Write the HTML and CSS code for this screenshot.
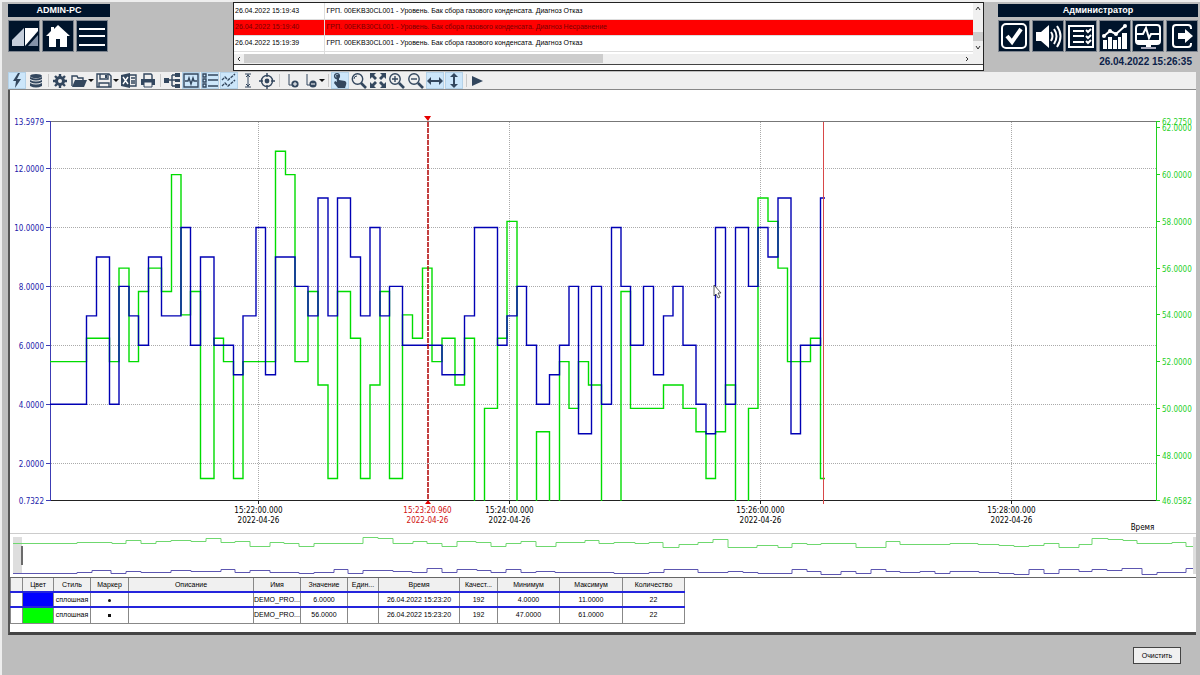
FILE: index.html
```html
<!DOCTYPE html>
<html lang="ru">
<head>
    <meta charset="UTF-8">
    <title>Тренды</title>
    <link rel="stylesheet" href="styles.css">
</head>
<body>
    <header class="top">
        <div class="station">
            <div class="title-bar">ADMIN-PC</div>
            <div class="nav">
                <button class="nav-btn" aria-label="Проект"><svg viewBox="1 1 30 30"><path fill="#c5cedb" d="M4 26V20L16 8H16V26z"/><path fill="#fff" d="M17 8H30V11L17 26z"/><path fill="#8492a8" d="M30 15V26H20z"/></svg></button>
                <button class="nav-btn" aria-label="Домой"><svg viewBox="1 1 30 30"><path fill="#fff" d="M16 5L28 16H25V27H18V19H14V27H7V16H4L9 11V7H12V9z"/></svg></button>
                <button class="nav-btn" aria-label="Меню"><svg viewBox="1 1 30 30"><path stroke="#fff" stroke-width="2" d="M3 9H29M3 16H29M3 25H29"/></svg></button>
            </div>
        </div>

        <div class="alarms">
            <div class="alarm-view">
                <table class="alarm-table">
                    <tr><td class="when">26.04.2022 15:19:43</td><td>ГРП. 00EKB30CL001 - Уровень. Бак сбора газового конденсата. Диагноз Отказ</td></tr>
                    <tr class="alert"><td class="when">26.04.2022 15:19:40</td><td>ГРП. 00EKB30CL001 - Уровень. Бак сбора газового конденсата. Диагноз Несравнение</td></tr>
                    <tr><td class="when">26.04.2022 15:19:39</td><td>ГРП. 00EKB30CL001 - Уровень. Бак сбора газового конденсата. Диагноз Отказ</td></tr>
                    <tr class="rest"><td class="when"></td><td></td></tr>
                </table>
                <div class="vscroll">
                    <svg viewBox="0 0 10 10"><path d="M3 7L5 4L7 7"/></svg>
                    <span class="vthumb"></span>
                    <svg viewBox="0 0 10 10"><path d="M3 3L5 6L7 3"/></svg>
                </div>
            </div>
            <div class="hscroll">
                <svg viewBox="0 0 10 10"><path d="M6 3L4 5L6 7"/></svg>
                <div class="htrack"><div class="hthumb"></div></div>
                <svg viewBox="0 0 10 10"><path d="M4 3L6 5L4 7"/></svg>
            </div>
        </div>

        <div class="operator">
            <div class="title-bar">Администратор</div>
            <div class="nav">
                <button class="nav-btn" aria-label="Квитировать"><svg viewBox="1 1 30 30"><rect class="line" x="4" y="4" width="24" height="24" rx="4"/><path fill="none" stroke="#fff" stroke-width="4" d="M9 16L14 22L23 9"/></svg></button>
                <button class="nav-btn" aria-label="Звук"><svg viewBox="1 1 30 30"><path fill="#fff" d="M4 12H9L17 5V28L9 21H4z"/><path class="line" d="M19 12Q22 16 19 21M22 9Q27 16 22 24M25 6Q32 16 25 27"/></svg></button>
                <button class="nav-btn" aria-label="Журнал"><svg viewBox="1 1 30 30"><path class="line" d="M4 6H28V27H4zM8 11H19M8 16H19M8 22H19M21 10L23 12L26 9M21 16L23 18L26 15M21 21L23 23L26 20"/></svg></button>
                <button class="nav-btn" aria-label="Тренды"><svg viewBox="1 1 30 30"><path fill="#fff" d="M4 20H8V29H4zM9 17H13V29H9zM14 20H18V29H14zM19 17H22V29H19zM23 13H28V29H23z"/><path class="line" d="M5 16L11 11L17 14L26 6"/><g fill="#fff"><circle cx="5" cy="16" r="2"/><circle cx="11" cy="11" r="2"/><circle cx="17" cy="14" r="2"/><circle cx="26" cy="6" r="2"/></g></svg></button>
                <button class="nav-btn" aria-label="Диагностика"><svg viewBox="1 1 30 30"><rect class="line" x="4" y="5" width="24" height="19" rx="3"/><path class="line" d="M5 14H11L14 8L17 18L19 14H27"/><path fill="#fff" d="M4 20H28V24H4zM14 24H19V27H14z"/><path fill="#aab" d="M9 27H24V29H9z"/></svg></button>
                <button class="nav-btn" aria-label="Выход"><svg viewBox="1 1 30 30"><path class="line" d="M25 9V8Q25 5 22 5H10Q7 5 7 8V24Q7 27 10 27H22Q25 27 25 24V23"/><path fill="#fff" d="M12 13H19V9L27 16L19 23V19H12z"/></svg></button>
            </div>
            <time class="clock">26.04.2022 15:26:35</time>
        </div>
    </header>

    <main class="trend">
        <div class="toolbar">
            <button class="tool on" aria-label="Онлайн"><svg viewBox="0 0 18 17"><path class="f" d="M10 1L5 9H8L7 16L13 7H9L12 1z"/></svg></button>
            <button class="tool" aria-label="Архив"><svg viewBox="0 0 18 17"><ellipse class="f" cx="9" cy="4" rx="6" ry="2"/><path class="f" d="M3 5Q9 8 15 5V7Q9 10 3 7zM3 8Q9 11 15 8V10Q9 13 3 10zM3 11Q9 14 15 11V14Q9 17 3 14z"/></svg></button>
            <span class="sep"></span>
            <button class="tool" aria-label="Настройки"><svg viewBox="0 0 18 17"><circle cx="9" cy="9" r="3.5" fill="none" stroke="#33475e" stroke-width="3"/><path stroke="#33475e" stroke-width="2.4" d="M9 2V5M9 13V16M2 9H5M13 9H16M4 4L6 6M12 12L14 14M4 14L6 12M12 6L14 4"/></svg></button>
            <button class="tool drop" aria-label="Открыть"><svg viewBox="0 0 18 17"><path class="s" d="M2 14V4H7L8 6H13V8"/><path class="f" d="M5 8H17L14 15H2z"/></svg><i class="caret"></i></button>
            <button class="tool drop" aria-label="Сохранить"><svg viewBox="0 0 18 17"><path class="s" d="M2 2H14L16 4V15H2zM5 2V7H13V2M4 15V11H14V15"/><path class="f" d="M10 3H12V6H10z"/></svg><i class="caret"></i></button>
            <button class="tool" aria-label="Экспорт в Excel"><svg viewBox="0 0 18 17"><path class="f" d="M1 3L10 1V16L1 14z"/><path class="s" d="M10 3H16V14H10M11 6H15M11 9H15M11 11H15"/><path stroke="#fff" stroke-width="1.4" d="M3 5L8 12M8 5L3 12"/></svg></button>
            <button class="tool" aria-label="Печать"><svg viewBox="0 0 18 17"><path class="s" d="M5 7V2H12L13 3V7"/><path class="f" d="M2 7H16V13H2z"/><path fill="#efefef" stroke="#33475e" d="M5 10H13V15H5z"/></svg></button>
            <span class="sep"></span>
            <button class="tool" aria-label="Структура"><svg viewBox="0 0 18 17"><path class="f" d="M1 6H6V11H1zM12 1H17V5H12zM12 7H17V10H12zM12 12H17V16H12z"/><path class="s" d="M6 8H12M9 3V14M9 3H12M9 14H12"/></svg></button>
            <button class="tool on" aria-label="График"><svg viewBox="0 0 18 17"><path class="s" d="M2 2H16V15H2zM3 9H6L7 6L9 12L11 6L12 9H15"/></svg></button>
            <button class="tool on" aria-label="Легенда"><svg viewBox="0 0 18 17"><path class="s" d="M2 2H5V5H2zM2 7H5V10H2zM2 12H5V15H2zM7 3H17M7 8H17M7 14H17"/></svg></button>
            <button class="tool on" aria-label="Линии"><svg viewBox="0 0 18 17"><path class="s" stroke-dasharray="3 1" d="M2 8L5 5L8 8L15 2M2 14L5 11L8 14L15 8"/></svg></button>
            <button class="tool" aria-label="Курсор"><svg viewBox="0 0 18 17"><path class="thin" d="M6 2H12M6 15H12M9 2V15M7 5L9 3L11 5M7 12L9 14L11 12"/></svg></button>
            <button class="tool" aria-label="Центр"><svg viewBox="0 0 18 17"><circle class="s" cx="9" cy="9" r="5.5"/><circle class="f" cx="9" cy="9" r="2.4"/><path class="s" d="M9 1V5M9 13V17M1 9H5M13 9H17"/></svg></button>
            <span class="sep"></span>
            <button class="tool" aria-label="Добавить ось"><svg viewBox="0 0 18 17"><path class="thin" d="M7 2V13H10"/><circle class="f" cx="13" cy="12" r="3.6"/><path stroke="#fff" d="M11 12H15M13 10V14"/></svg></button>
            <button class="tool drop" aria-label="Удалить ось"><svg viewBox="0 0 18 17"><path class="thin" d="M6 2V13H9"/><circle class="f" cx="12" cy="12" r="3.6"/><path stroke="#fff" d="M10 12H14"/></svg><i class="caret"></i></button>
            <span class="sep"></span>
            <button class="tool on" aria-label="Рука"><svg viewBox="0 0 18 17"><circle class="s" cx="6" cy="4" r="2.4"/><path class="f" d="M5 3H8V8L14 9Q16 10 15 13L14 16H7L3 11L4 9L6 10z"/></svg></button>
            <button class="tool" aria-label="Масштаб"><svg viewBox="0 0 18 17"><circle class="s" cx="7.5" cy="7" r="5.2"/><path class="thin" d="M4 7Q4 4 7 4"/><path stroke="#33475e" stroke-width="2.6" d="M11 11L16 16"/></svg></button>
            <button class="tool" aria-label="Весь график"><svg viewBox="0 0 18 17"><path class="f" d="M1 1H7L5 3L8 6L6 8L3 5L1 7zM17 1H11L13 3L10 6L12 8L15 5L17 7zM1 16H7L5 14L8 11L6 9L3 12L1 10zM17 16H11L13 14L10 11L12 9L15 12L17 10z"/></svg></button>
            <button class="tool" aria-label="Увеличить"><svg viewBox="0 0 18 17"><circle class="s" cx="7" cy="7" r="5.2"/><path class="s" d="M4 7H10M7 4V10"/><path stroke="#33475e" stroke-width="2.6" d="M11 11L16 16"/></svg></button>
            <button class="tool" aria-label="Уменьшить"><svg viewBox="0 0 18 17"><circle class="s" cx="7" cy="7" r="5.2"/><path class="s" d="M4 7H10"/><path stroke="#33475e" stroke-width="2.6" d="M11 11L16 16"/></svg></button>
            <button class="tool on" aria-label="По горизонтали"><svg viewBox="0 0 18 17"><path class="f" d="M1 9L5 5V8H13V5L17 9L13 13V10H5V13z"/></svg></button>
            <button class="tool on" aria-label="По вертикали"><svg viewBox="0 0 18 17"><path class="f" d="M9 1L13 5H10V12H13L9 16L5 12H8V5H5z"/></svg></button>
            <span class="sep"></span>
            <button class="tool" aria-label="Пуск"><svg viewBox="0 0 18 17"><path class="f" d="M3 4L14 9L3 14z"/></svg></button>
        </div>

        <div class="view">
            <svg class="chart" id="chart" viewBox="10 90 1186 443">
                <defs><clipPath id="plot"><rect x="50" y="121" width="1107" height="380"/></clipPath></defs>
                <g id="grid"></g>
                <g clip-path="url(#plot)">
                    <path class="curve green" id="curveGreen"/>
                    <path class="curve blue" id="curveBlue"/>
                </g>
                <path class="now" d="M823.5 122V504"/>
                <path class="marker" d="M428 122V500"/>
                <path class="marker-end" d="M424 116H431L428 121zM425 504H431L428 500z"/>
                <path class="pointer" d="M714 285V296L716 294L718 298L720 297L718 293H721z"/>
                <g id="labels"></g>
            </svg>
            <svg class="overview" viewBox="10 534 1186 43">
                <path fill="#dedede" d="M13 537H22V574H13zM1193 537H1196V574H1193z"/>
                <path fill="#6b6b6b" d="M21 546H23V565H21z"/>
                <path class="mini green" id="miniGreen"/>
                <path class="mini blue" id="miniBlue"/>
            </svg>

            <div class="legend-wrap">
                <table class="legend">
                    <colgroup><col class="w12"><col class="w31"><col class="w37"><col class="w38"><col class="w125"><col class="w47"><col class="w47"><col class="w31"><col class="w81"><col class="w38"><col class="w62"><col class="w63"><col class="w62"></colgroup>
                    <thead>
                        <tr><th></th><th>Цвет</th><th>Стиль</th><th>Маркер</th><th>Описание</th><th>Имя</th><th>Значение</th><th>Един...</th><th>Время</th><th>Качест...</th><th>Минимум</th><th>Максимум</th><th>Количество</th></tr>
                    </thead>
                    <tbody>
                        <tr class="selected"><td></td><td class="fill-blue"></td><td>сплошная</td><td><i class="dot"></i></td><td></td><td>DEMO_PRO...</td><td>6.0000</td><td></td><td>26.04.2022 15:23:20</td><td>192</td><td>4.0000</td><td>11.0000</td><td>22</td></tr>
                        <tr><td></td><td class="fill-green"></td><td>сплошная</td><td><i class="dot square"></i></td><td></td><td>DEMO_PRO...</td><td>56.0000</td><td></td><td>26.04.2022 15:23:20</td><td>192</td><td>47.0000</td><td>61.0000</td><td>22</td></tr>
                    </tbody>
                </table>
            </div>
        </div>
    </main>

    <footer class="bottom">
        <button class="clear-btn">Очистить</button>
    </footer>

    <script src="script.js"></script>
</body>
</html>
```
FILE: styles.css
```css
* {
    box-sizing: border-box;
}

body {
    margin: 0;
    min-height: 100vh;
    display: flex;
    flex-direction: column;
    padding: 2px 0 0 6px;
    border-left: 2px solid #eee;
    background: #bdbdbd;
    box-shadow: inset 0 2px #eee;
    font: 7px/10px "Liberation Sans", Arial, sans-serif;
    color: #000;
}

button {
    margin: 0;
    padding: 0;
    border: none;
    font: inherit;
    color: inherit;
    cursor: pointer;
}

svg {
    display: block;
}

/* header */
.top {
    display: flex;
    align-items: flex-start;
    justify-content: space-between;
    padding-right: 2px;
    height: 70px;
}

.station {
    width: 102px;
    padding-top: 2px;
}

.operator {
    width: 200px;
    padding-top: 2px;
}

.title-bar {
    height: 13px;
    background: #00142b;
    color: #fff;
    font: bold 9px/13px "Liberation Sans", sans-serif;
    text-align: center;
}

.nav {
    display: flex;
    gap: 2px;
    margin-top: 3px;
}

.nav-btn {
    width: 32px;
    height: 32px;
    background: #00142b;
    border: 1px solid #7d848e;
    flex: none;
}

.operator .nav {
    justify-content: space-between;
    gap: 0;
}

.line {
    fill: none;
    stroke: #fff;
    stroke-width: 2;
}

.clock {
    display: block;
    margin-top: 4px;
    padding-right: 6px;
    font: bold 10px/12px "Liberation Sans", sans-serif;
    text-align: right;
    color: #0c1f4a;
}

/* alarm list */
.alarms {
    flex: 1;
    height: 69px;
    margin: 0 14px 0 123px;
    border: 1px solid #222;
    background: #fff;
}

.alarm-view {
    display: flex;
    height: 51px;
    overflow: hidden;
}

.alarm-table {
    flex: 1;
    border-collapse: collapse;
    align-self: flex-start;
}

.alarm-table td {
    height: 16px;
    padding: 0 2px;
    border-bottom: 1px solid #ddd;
    white-space: nowrap;
}

.alarm-table .when {
    width: 90px;
    border-right: 1px solid #ddd;
    padding: 0 1px;
}

.alarm-table .rest td {
    height: 4px;
    border-bottom: none;
}

.alert {
    background: #f00;
    color: #700;
}

.vscroll {
    width: 10px;
    background: #f0f0f0;
    display: flex;
    flex-direction: column;
}

.vscroll svg, .hscroll svg {
    width: 10px;
    height: 10px;
    fill: none;
    stroke: #333;
    flex: none;
}

.vthumb {
    height: 9px;
    margin: 19px 0 2px;
    background: #cdcdcd;
}

.hscroll {
    display: flex;
    height: 11px;
    padding-right: 11px;
    background: #f0f0f0;
    border-bottom: 1px solid #444;
}

.htrack {
    flex: 1;
}

.hthumb {
    width: 50%;
    height: 9px;
    background: #cdcdcd;
}

/* trend window */
.trend {
    flex: 1;
    display: flex;
    flex-direction: column;
    margin-right: 4px;
}

.toolbar {
    display: flex;
    gap: 1px;
    height: 18px;
    background: #efefef;
    border-bottom: 1px solid #888;
}

.tool {
    display: flex;
    align-items: center;
    width: 18px;
    background: none;
}

.tool svg {
    width: 18px;
    height: 17px;
    flex: none;
}

.tool.on {
    background: #cce6fa;
    box-shadow: inset 0 0 0 1px #b5d2e8;
}

.tool.drop {
    width: 24px;
}

.caret {
    border: 3px solid transparent;
    border-top-color: #111;
    border-bottom: none;
}

.sep {
    width: 4px;
    margin: 2px 0;
    background: linear-gradient(#c8c8c8, #c8c8c8) center / 1px 100% no-repeat;
}

.f {
    fill: #33475e;
}

.s {
    fill: none;
    stroke: #33475e;
    stroke-width: 1.4;
}

.thin {
    fill: none;
    stroke: #33475e;
}

.view {
    flex: 1;
    background: #fff;
    border-left: 2px solid #555;
    border-bottom: 3px solid #444;
}

.chart {
    width: 100%;
    height: auto;
    font: 8px "DejaVu Sans Condensed", "DejaVu Sans", sans-serif;
}

.overview {
    width: 100%;
    height: auto;
    border-top: 1px solid #ccc;
}

.gridline {
    fill: none;
    stroke: #aaa;
    stroke-dasharray: 1 1;
}

.axis {
    fill: none;
    stroke: #222;
}

.axis-top {
    stroke: #777;
}

.axis-blue {
    stroke: #3c3cb4;
}

.axis-green {
    stroke: #1fd01f;
}

.text-blue {
    fill: #1a1aaa;
    text-anchor: end;
}

.text-green {
    fill: #1fd01f;
}

.text-time {
    text-anchor: middle;
}

.text-red {
    fill: #d01010;
}

.curve {
    fill: none;
    stroke-width: 1.4;
}

.curve.green {
    stroke: #00dc00;
}

.curve.blue {
    stroke: #0000b4;
}

.mini {
    fill: none;
}

.mini.green {
    stroke: #6fd86f;
}

.mini.blue {
    stroke: #5c56b0;
}

.now {
    fill: none;
    stroke: #d84848;
}

.marker {
    fill: none;
    stroke: #b00000;
    stroke-width: 1.5;
    stroke-dasharray: 5 1;
}

.marker-end {
    fill: #e60000;
}

.pointer {
    fill: #fff;
    stroke: #333;
    stroke-width: 0.8;
}

/* legend table */
.legend-wrap {
    border-top: 1px solid #666;
    padding-bottom: 7px;
}

.legend {
    table-layout: fixed;
    width: 675px;
    border-collapse: collapse;
    text-align: center;
}

.legend th, .legend td {
    height: 16px;
    padding: 0;
    border: 1px solid #888;
    font-weight: normal;
    white-space: nowrap;
    overflow: hidden;
}

.legend th {
    height: 14px;
    background: #f0f0f0;
    border-top: none;
}

.legend .selected td {
    height: 15px;
    border-top: 2px solid #2424dc;
    border-bottom: 2px solid #2424dc;
}

.legend .fill-blue {
    background: #00f;
}

.legend .fill-green {
    background: #0f0;
}

.dot {
    display: inline-block;
    width: 3px;
    height: 3px;
    border-radius: 50%;
    background: #111;
}

.dot.square {
    border-radius: 0;
}

.w12 { width: 12px; }
.w31 { width: 31px; }
.w37 { width: 37px; }
.w38 { width: 38px; }
.w47 { width: 47px; }
.w62 { width: 62px; }
.w63 { width: 63px; }
.w81 { width: 81px; }
.w125 { width: 125px; }

.bottom {
    display: flex;
    justify-content: flex-end;
    padding: 12px 19px 11px 0;
}

.clear-btn {
    width: 48px;
    height: 17px;
    background: #f0f0f0;
    border: 1px solid #444;
}
```
FILE: script.js
```javascript
// x position, value
const blue = [[50,4],[86.5,7],[96.5,9],[109.5,4],[119,8],[129,7],[138.5,6],[148.5,9],[161.5,7],[181,10],
    [190.5,6],[200.5,9],[214,6],[233.5,5],[243,7],[256,10],[265.5,5],[275.5,9],[295,8],[308,7],[318,11],
    [328,7],[337.5,11],[350.5,9],[360.5,7],[370,10],[380,7],[389.5,8],[402.5,6],[442,5],[464.5,7],[474.5,10],
    [497.5,6],[507,7],[517,8],[526.5,6],[536.5,4],[549.5,5],[559.5,6],[569,8],[578.5,3],[591.5,8],[601.5,4],
    [611.5,10],[621,8],[630.5,6],[643.5,8],[653.5,5],[663.5,7],[673,8],[683,6],[696,4],[706,3],[715.5,10],
    [725.5,4],[735.5,10],[748.5,8],[758,10],[768,9],[778,11],[791,3],[800.5,6],[820.5,11],[825,11]];

const green = [[50,52],[86.5,53],[109.5,52],[119,56],[129,52],[138.5,55],[148.5,56],[161.5,55],[171.5,60],
    [181,54],[190.5,55],[200.5,47],[214,53],[223.5,52],[233.5,47],[243,52],[275.5,61],[285.5,60],[295,52],
    [308,55],[318,51],[328,47],[337.5,55],[350.5,53],[360.5,47],[370,51],[380,55],[389.5,47],[402.5,54],
    [412.5,53],[422.5,56],[432,52],[442,53],[455,51],[464.5,53],[474.5,45],[484.5,50],[497.5,53],[507,58],
    [517,45],[536.5,49],[549.5,45],[559.5,52],[569,50],[578.5,52],[588.5,51],[601.5,45],[621,55],[630.5,50],
    [663.5,51],[683,50],[696,49],[706,47],[715.5,49],[725.5,51],[735.5,45],[748.5,50],[758,59],[768,58],
    [778,56],[787.5,52],[810.5,53],[820.5,47],[825,47]];

// overview strip, x and y
const miniGreen = [[13,543.5],[77,542.5],[112,543.5],[126,540.5],[141,543.5],[156,541.5],[171,540.5],[191,541.5],
    [206,538.5],[221,542.5],[235,541.5],[250,546.5],[270,542.5],[284,543.5],[299,546.5],[314,543.5],[363,537.5],
    [378,538.5],[393,543.5],[413,541.5],[427,543.5],[442,546.5],[457,541.5],[476,542.5],[491,546.5],[506,543.5],
    [521,541.5],[536,546.5],[556,542.5],[585,540.5],[599,543.5],[614,542.5],[635,543.5],[649,542.5],[663,547.5],
    [679,544.5],[698,542.5],[713,539.5],[728,547.5],[757,545.5],[778,547.5],[792,543.5],[807,544.5],[821,543.5],
    [856,547.5],[886,541.5],[900,544.5],[950,543.5],[978,544.5],[999,545.5],[1014,546.5],[1029,545.5],
    [1044,543.5],[1059,547.5],[1079,544.5],[1092,538.5],[1108,539.5],[1123,540.5],[1137,543.5],[1172,542.5],
    [1186,546.5],[1193,546.5]];

const miniBlue = [[13,573.5],[77,572.5],[92,570.5],[111,573.5],[126,571.5],[141,572.5],[171,570.5],[191,571.5],
    [221,569.5],[235,572.5],[250,570.5],[270,572.5],[299,573.5],[314,572.5],[334,569.5],[348,573.5],[363,570.5],
    [393,571.5],[412,572.5],[427,568.5],[442,572.5],[457,569.5],[477,570.5],[491,572.5],[506,569.5],[521,572.5],
    [536,571.5],[555,572.5],[614,573.5],[649,572.5],[664,569.5],[698,572.5],[728,571.5],[743,572.5],[758,573.5],
    [792,569.5],[807,571.5],[821,574.5],[841,571.5],[856,573.5],[871,569.5],[886,571.5],[900,572.5],[920,571.5],
    [935,573.5],[950,571.5],[979,572.5],[999,573.5],[1014,574.5],[1029,569.5],[1044,573.5],[1059,569.5],
    [1079,571.5],[1092,569.5],[1107,570.5],[1122,568.5],[1142,574.5],[1157,572.5],[1186,568.5],[1193,568.5]];

const yBlue = v => 500.5 - (v - 0.7322) * 379 / 12.8657;
const yGreen = v => 500.5 - (v - 46.0582) * 379 / 16.2168;

function steps(points, y) {
    let d = 'M' + points[0][0] + ' ' + y(points[0][1]);
    for (const [x, v] of points.slice(1)) {
        d += 'H' + x + 'V' + y(v);
    }
    return d;
}

document.getElementById('curveBlue').setAttribute('d', steps(blue, yBlue));
document.getElementById('curveGreen').setAttribute('d', steps(green, yGreen));
document.getElementById('miniBlue').setAttribute('d', steps(miniBlue, y => y));
document.getElementById('miniGreen').setAttribute('d', steps(miniGreen, y => y));

let grid = '';
let labels = '';

function path(cls, d) {
    grid += `<path class="${cls}" d="${d}"/>`;
}

function label(cls, x, y, text) {
    labels += `<text class="${cls}" x="${x}" y="${y}">${text}</text>`;
}

for (const v of [2, 4, 6, 8, 10, 12]) {
    path('gridline', `M51 ${Math.floor(yBlue(v)) + 0.5}H1156`);
}
for (const v of [0.7322, 2, 4, 6, 8, 10, 12, 13.5979]) {
    const y = Math.floor(yBlue(v)) + 0.5;
    path('axis axis-blue', `M46 ${y}H50`);
    label('text-blue', 44, y + 3, v.toFixed(4));
}
for (const v of [46.0582, 48, 50, 52, 54, 56, 58, 60, 62, 62.275]) {
    const y = Math.floor(yGreen(v)) + 0.5;
    path('axis axis-green', `M1157 ${y}H1160`);
    label('text-green', 1162, y + 3, v.toFixed(4));
}
for (const [x, t] of [[258.5, '15:22'], [509.5, '15:24'], [760.5, '15:26'], [1011.5, '15:28']]) {
    path('gridline', `M${x} 122V500`);
    path('axis', `M${x} 500V504`);
    label('text-time', x, 513, t + ':00.000');
    label('text-time', x, 523, '2022-04-26');
}
path('axis axis-top', 'M50 121.5H1157');
path('axis', 'M50 500.5H1157');
path('axis axis-blue', 'M50.5 121V501');
path('axis axis-green', 'M1156.5 121V501');
label('text-time text-red', 427.5, 513, '15:23:20.960');
label('text-time text-red', 427.5, 523, '2022-04-26');
label('text-time', 1142.5, 530, 'Время');

document.getElementById('grid').innerHTML = grid;
document.getElementById('labels').innerHTML = labels;
```
